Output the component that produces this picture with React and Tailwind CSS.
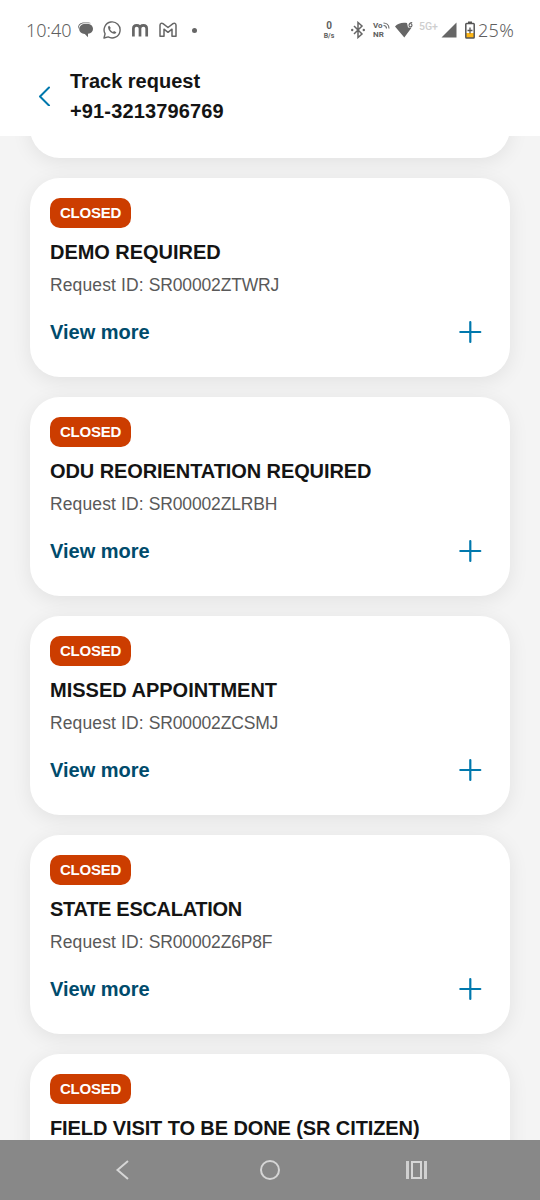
const requests = [
  { title: "DEMO REQUIRED", id: "SR00002ZTWRJ", tracking: "tracking-[-0.04px]" },
  { title: "ODU REORIENTATION REQUIRED", id: "SR00002ZLRBH", tracking: "tracking-[-0.09px]" },
  { title: "MISSED APPOINTMENT", id: "SR00002ZCSMJ", tracking: "tracking-normal" },
  { title: "STATE ESCALATION", id: "SR00002Z6P8F", tracking: "tracking-[-0.3px]" },
  { title: "FIELD VISIT TO BE DONE (SR CITIZEN)", tracking: "tracking-[-0.1px]" },
];

const cardClass =
  "h-[199px] w-full shrink-0 rounded-[30px] bg-white shadow-[0_4px_20px_rgba(0,0,0,0.08)]";

function StatusBar() {
  return (
    <div className="flex h-[60px] items-center pl-[26px] pr-[25px] font-['Noto_Sans','Open_Sans',sans-serif] text-[#5f5f5f]">
      <span className="w-[46px] text-[18px] leading-6 font-light">10:40</span>

      <svg className="ml-[5px] size-[18px]" viewBox="0 0 18 18">
        <path d="M1 7.500C.8 3.500 3.500 1.500 7 1.500h4.500c1 0 1.800.3 2.500.8H7.500C4.200 2.300 1.800 4 1.500 7.500Z" fill="#666" />
        <path
          d="M8 3h2.500c3.200 0 5.500 2 5.500 4.900 0 2.700-2 4.500-5 4.900v3.400L7.800 12.900C4.600 12.800 2.200 10.900 2.200 8S4.800 3 8 3Z"
          fill="#666"
        />
      </svg>

      <svg className="ml-2 size-[18px]" viewBox="0 0 18 18" fill="none">
        <path
          d="M1 17l1.100-4.200A8 8 0 1 1 5.200 15.900Z"
          stroke="#666"
          strokeWidth="1.400"
          strokeLinejoin="round"
        />
        <path
          d="M6.300 4.800c-.9.200-1.300 1-1.200 2 .4 3 3.100 5.600 6 6 1.100.1 2-.5 2.200-1.500l-2.300-1.200-1 1C8.700 10.600 7.500 9.400 7 8.100l.8-1Z"
          fill="#666"
        />
      </svg>

      <svg className="ml-[10px] h-[18px] w-[18px]" viewBox="0 0 18 18" fill="none">
        <path
          d="M2.400 15.500V7.500c0-2.200 1.500-3.200 3.300-3.200S9 5.300 9 7.500v8M9 7.500c0-2.200 1.500-3.200 3.400-3.200s3.300 1 3.300 3.200v8"
          stroke="#666"
          strokeWidth="2.700"
        />
      </svg>

      <svg className="ml-[10px] h-[18px] w-[18px]" viewBox="0 0 18 18" fill="none">
        <path
          d="M1 4.200c0-2 1.800-2.400 3-1.500L9 6.500l5-3.800c1.200-.9 3-.5 3 1.500v11.100h-4V8.200l-4 3.100-4-3.100v7.100H1Z"
          stroke="#666"
          strokeWidth="1.500"
          strokeLinejoin="round"
        />
      </svg>

      <span className="ml-[15px] size-[5px] rounded-full bg-[#666]" />

      <div className="ml-auto flex items-center">
        <div className="flex w-4 flex-col items-center font-['Roboto',sans-serif] font-bold">
          <span className="text-[10px] leading-3">0</span>
          <span className="text-[7px] leading-[8px]">B/s</span>
        </div>

        <svg className="ml-[14px] h-[18px] w-[14px]" viewBox="0 0 14 18" fill="none">
          <path d="M3 5l8 8-4 3.500V1.500L11 5l-8 8" stroke="#666" strokeWidth="1.500" />
          <circle cx="1.200" cy="9" r="1.200" fill="#666" />
          <circle cx="12.800" cy="9" r="1.200" fill="#666" />
        </svg>

        <div className="ml-[8px] flex w-[18px] flex-col font-['Roboto',sans-serif] text-[8px] leading-[9px] font-bold">
          <span className="flex items-center">
            Vo
            <svg className="size-[7px]" viewBox="0 0 7 7" fill="none" stroke="#666" strokeWidth="1.100">
              <path d="M.5 1C3.500 1 6 3 6 6.500M.5 3.500C2.500 3.500 3.500 4.500 3.500 6.500" />
            </svg>
          </span>
          <span>NR</span>
        </div>

        <svg className="ml-[4px] h-[18px] w-[19px]" viewBox="0 0 19 18">
          <path d="M0 5.500C3 2.200 7 1.200 12 2l1 4.500 3.500.3L9.300 16.500Z" fill="#666" />
          <path
            d="M17.200 1.500c-2 .2-3.200 1.300-3.200 2.800a1.500 1.500 0 1 0 1.800-1.400"
            fill="none"
            stroke="#666"
            strokeWidth="1.100"
          />
        </svg>

        <span className="mb-[6px] ml-[5px] w-[21px] font-['Roboto',sans-serif] text-[10.5px] leading-3 font-medium text-[#cecece]">
          5G+
        </span>

        <svg className="ml-px h-[16px] w-[16px]" viewBox="0 0 16 16">
          <path d="M15.500.500v15H.5Z" fill="#666" />
        </svg>

        <svg className="ml-[8px] h-[18px] w-[10px]" viewBox="0 0 10 18">
          <path d="M3 .500h4v2H3Z" fill="#555" />
          <path d="M1 12h8v5H1Z" fill="#fdb515" />
          <rect x=".8" y="2.500" width="8.400" height="14.500" rx=".8" fill="none" stroke="#555" strokeWidth="1.500" />
          <path d="M5 6.500v6M2.500 9.500h5" stroke="#555" strokeWidth="1.300" />
        </svg>

        <span className="ml-[3px] w-[37px] text-[18px] leading-6 font-light tracking-[0.3px]">25%</span>
      </div>
    </div>
  );
}

function Header() {
  return (
    <header className="flex h-[76px] items-start pl-[38px]">
      <svg className="mt-[26px] h-5 w-[13px]" viewBox="0 0 13 20" fill="none">
        <path
          d="M11 1.500 2 10.500l9 9"
          stroke="#0078ad"
          strokeWidth="2"
          strokeLinecap="round"
          strokeLinejoin="round"
        />
      </svg>
      <div className="mt-[6px] ml-[19px] text-[20px] leading-[30px] font-bold text-[#141414]">
        <h1>Track request</h1>
        <p className="tracking-[0.14px]">+91-3213796769</p>
      </div>
    </header>
  );
}

function RequestCard({ title, id, tracking }) {
  return (
    <article className={`${cardClass} flex flex-col items-start px-5 pt-5`}>
      <span className="flex h-[30px] w-[81px] items-center justify-center rounded-[10px] bg-[#cc3d00] text-[15px] font-bold tracking-[-0.25px] text-white">
        CLOSED
      </span>
      <h2 className={`mt-[9px] text-[20px] leading-[30px] font-bold whitespace-nowrap text-[#141414] ${tracking}`}>
        {title}
      </h2>
      {id && (
        <>
          <p className="mt-[6px] text-[17.5px] leading-6 tracking-[0.12px] text-[#595959]">
            Request ID: <span className="tracking-[-0.15px]">{id}</span>
          </p>
          <button className="mt-5 flex w-full items-center justify-between pr-2 text-[20px] leading-[30px] font-bold text-[#004b6c]">
            View more
            <svg className="size-6" viewBox="0 0 24 24" stroke="#0078ad" strokeWidth="2.200" strokeLinecap="round">
              <path d="M12.300 2v20M2.300 12h20" />
            </svg>
          </button>
        </>
      )}
    </article>
  );
}

function NavBar() {
  return (
    <nav className="flex h-[60px] items-center bg-[#888]">
      <svg className="ml-[115px] h-5 w-4" viewBox="0 0 16 20" fill="none">
        <path d="M13 1 2.500 10 13 19" stroke="#d6d6d6" strokeWidth="2" />
      </svg>
      <span className="ml-[129px] size-5 rounded-full border-2 border-[#d6d6d6]" />
      <span className="ml-[126px] flex h-[18px] gap-[2px]">
        <i className="w-[3px] bg-[#d0d0d0]" />
        <i className="w-[11px] border-2 border-[#d6d6d6]" />
        <i className="w-[3px] bg-[#d0d0d0]" />
      </span>
    </nav>
  );
}

export default function App() {
  return (
    <div className="flex h-[1200px] w-[540px] flex-col overflow-hidden bg-white font-['Liberation_Sans',Arial,sans-serif]">
      <StatusBar />
      <Header />
      {/* list is scrolled, so the first card only shows its lower edge */}
      <main className="h-[1004px] overflow-hidden bg-[#f4f4f4] px-[30px]">
        <div className="-mt-[177px] flex flex-col gap-5">
          <div className={cardClass} />
          {requests.map((request) => (
            <RequestCard key={request.title} {...request} />
          ))}
        </div>
      </main>
      <NavBar />
    </div>
  );
}
